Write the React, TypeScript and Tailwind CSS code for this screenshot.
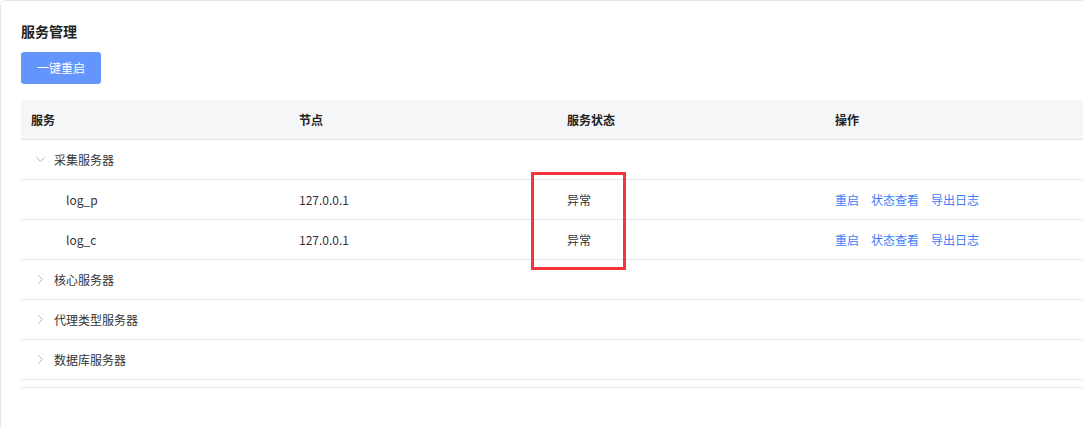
import { ChevronDown, ChevronRight } from "lucide-react";

type Row = {
  name: string;
  node?: string;
  status?: string;
  group?: boolean;
  open?: boolean;
  ops?: boolean;
};

const rows: Row[] = [
  { name: "采集服务器", group: true, open: true },
  { name: "log_p", node: "127.0.0.1", status: "异常", ops: true },
  { name: "log_c", node: "127.0.0.1", status: "异常", ops: true },
  { name: "核心服务器", group: true },
  { name: "代理类型服务器", group: true },
  { name: "数据库服务器", group: true },
];

const App = () => {
  return (
    <div
      className="w-[1083px] h-[427px] overflow-hidden bg-white text-[#333]"
      style={{ fontFamily: '"Noto Sans CJK SC", "Noto Sans", sans-serif' }}
    >
      <div className="relative w-[1100px] h-[440px] border border-[#e4e6eb] rounded-md pl-5 pt-5">
        <h2 className="text-[14px] font-bold leading-[20px] text-[#222]">服务管理</h2>

        <button className="mt-[11px] w-20 h-8 rounded-[3px] bg-[#6395fd] text-white text-[12px]">
          一键重启
        </button>

        {/* Table */}
        <div className="mt-4 w-[1072px] text-[12px]">
          <div className="grid grid-cols-[268px_268px_268px_268px] h-10 items-center bg-[#f5f6f8] border-b border-[#e3e4ea] font-bold text-[#222]">
            <div className="pl-[10px]">服务</div>
            <div className="pl-[10px]">节点</div>
            <div className="pl-[10px]">服务状态</div>
            <div className="pl-[10px]">操作</div>
          </div>

          {rows.map((row) => (
            <div
              key={row.name}
              className="grid grid-cols-[268px_268px_268px_268px] h-10 items-center border-b border-[#e6e7ec]"
            >
              {row.group ? (
                <div className="flex items-center pl-[12px]">
                  {row.open ? (
                    <ChevronDown className="w-[15px] h-[15px] text-[#a3a8b3]" strokeWidth={1.4} />
                  ) : (
                    <ChevronRight className="w-[15px] h-[15px] text-[#a3a8b3]" strokeWidth={1.4} />
                  )}
                  <span className="ml-[6px]">{row.name}</span>
                </div>
              ) : (
                <div className="pl-[45px]">{row.name}</div>
              )}
              <div className="pl-[10px]">{row.node}</div>
              <div className="pl-[10px]">{row.status}</div>
              <div className="pl-[10px] flex gap-3 text-[#3f7cf7]">
                {row.ops && (
                  <>
                    <span>重启</span>
                    <span>状态查看</span>
                    <span>导出日志</span>
                  </>
                )}
              </div>
            </div>
          ))}

          <div className="h-2 border-b border-[#e6e7ec]" />
        </div>

        {/* annotation box */}
        <div className="absolute left-[530px] top-[171px] w-[95px] h-[98px] border-[3px] border-[#f4353b]" />
      </div>
    </div>
  );
};

export default App;
